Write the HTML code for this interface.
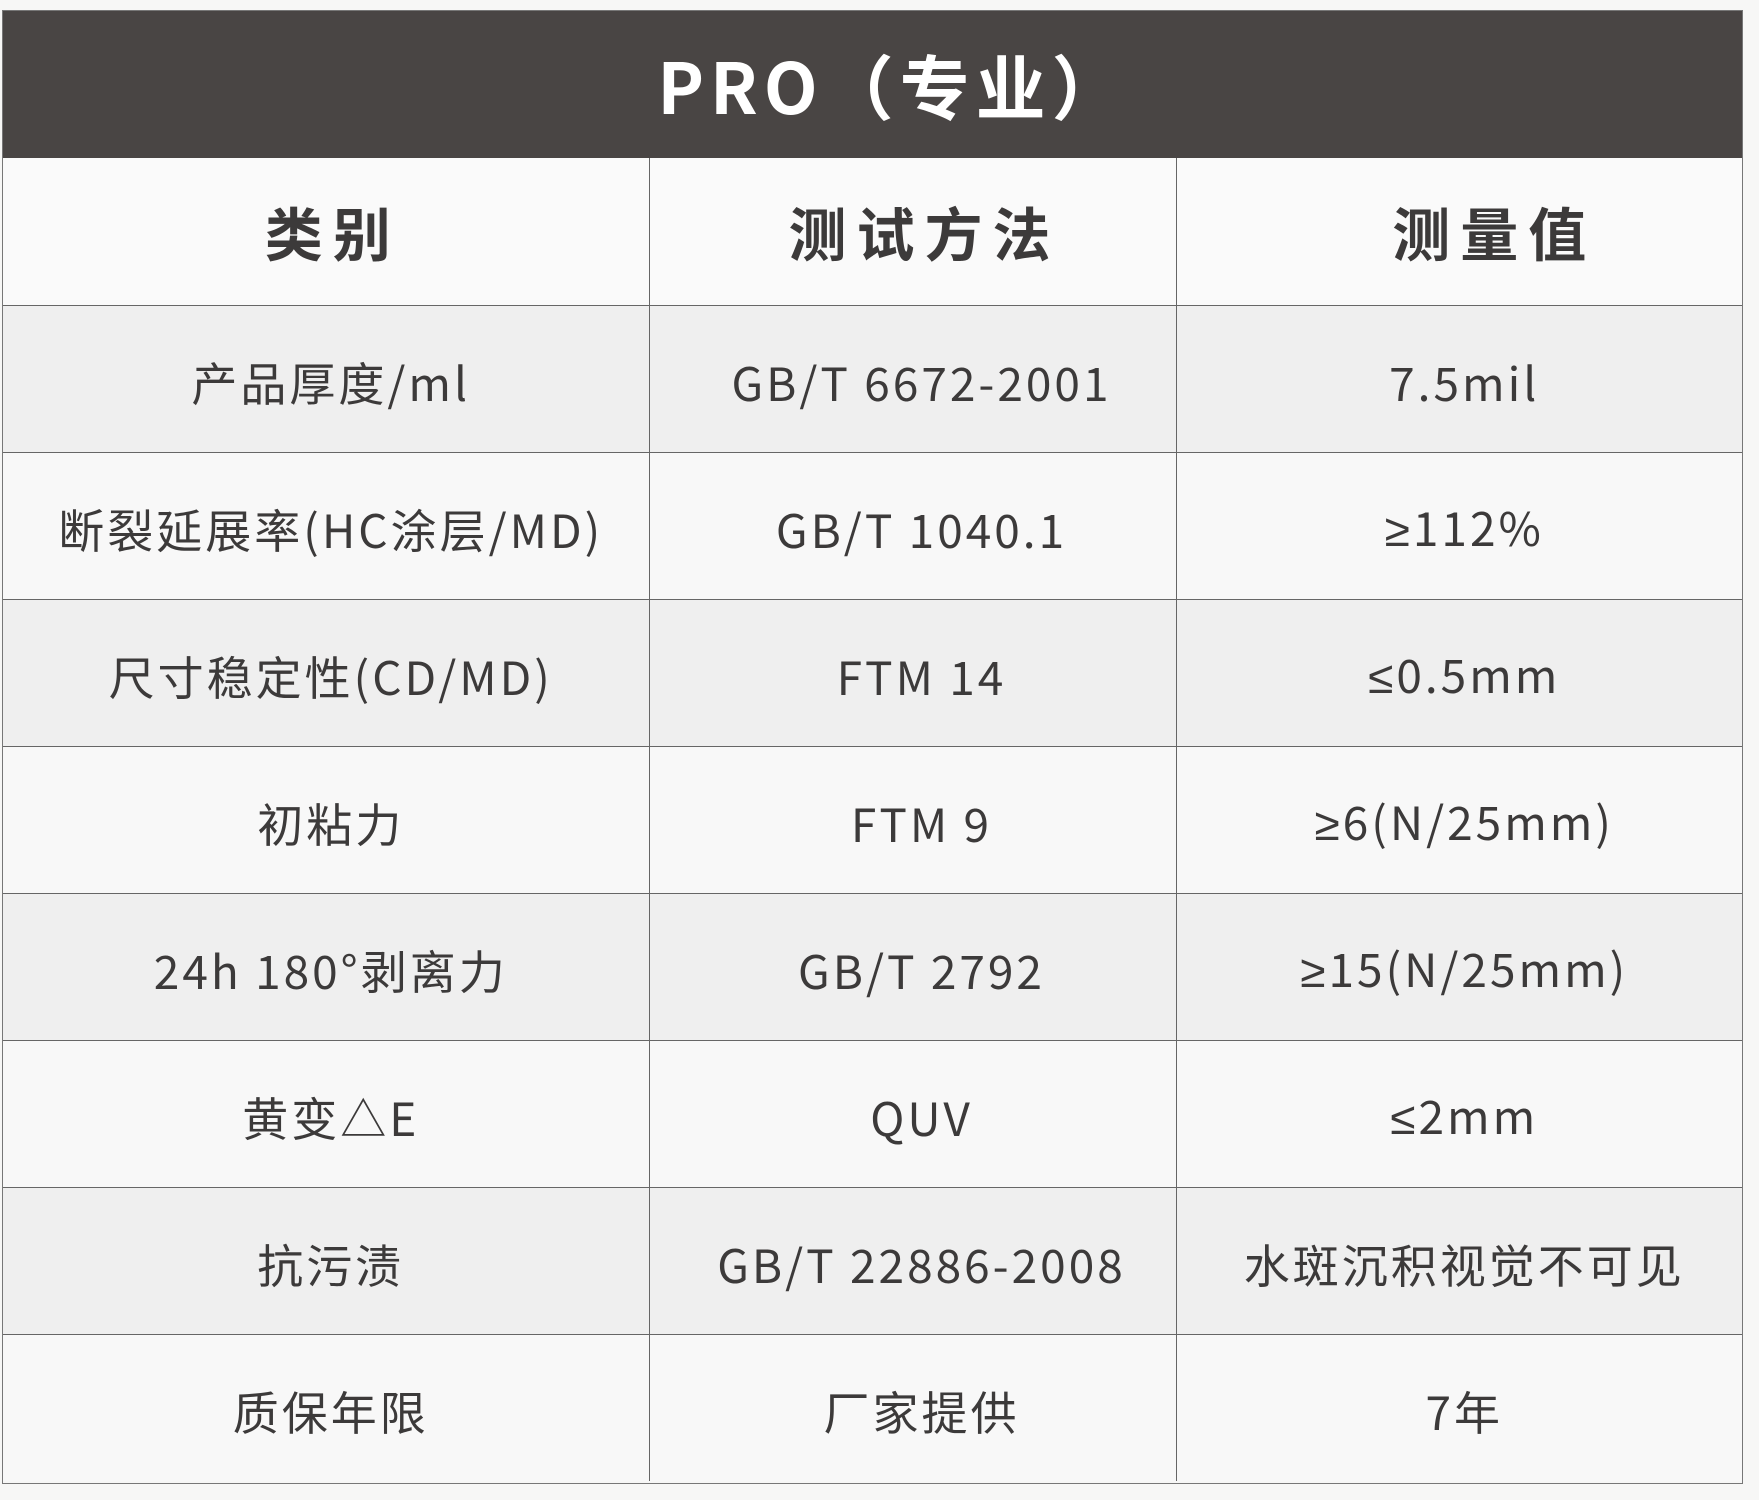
<!DOCTYPE html>
<html><head><meta charset="utf-8"><style>
html,body{margin:0;padding:0;width:1759px;height:1500px;background:#f7f7f6;overflow:hidden}
.wrap{position:absolute;left:2px;top:10px;width:1741px;height:1474px;border:1px solid #777;box-sizing:border-box;overflow:hidden}
.title{position:absolute;left:0;top:0;width:100%;height:147px;background:#494544;color:#fff;font:bold 70px "Noto Sans CJK SC",sans-serif;letter-spacing:6px;display:flex;align-items:center;justify-content:center;padding-left:40px;box-sizing:border-box}
table{position:absolute;left:0;top:147px;width:1739px;border-collapse:collapse;table-layout:fixed}
tr{height:147px}
td{border:1px solid #666;text-align:center;vertical-align:middle;font:46px "Noto Sans CJK SC",sans-serif;color:#3c3a3a;letter-spacing:3px;padding:6px 0 0 10px;white-space:nowrap;line-height:60px}
.s{font-family:"Liberation Sans",sans-serif}
tr:first-child td{border-top:none;font-weight:bold;font-size:58px;background:#fafafa;letter-spacing:10px;padding:0 0 0 14px}
tr:nth-child(even) td{background:#efefef}
tr:nth-child(odd) td{background:#f8f8f8}
tr:first-child td{background:#fafafa}
td:first-child{border-left:none}td:last-child{border-right:none}
tr:last-child td{border-bottom:none}
</style></head><body>
<div class="wrap">
<div class="title">PRO（专业）</div>
<table>
<colgroup><col style="width:646px"><col style="width:527px"><col style="width:566px"></colgroup>
<tr><td>类别</td><td style="padding-left:24px">测试方法</td><td style="padding-left:70px">测量值</td></tr>
<tr><td>产品厚度/ml</td><td style="padding-left:18px">GB/T 6672-2001</td><td>7.5mil</td></tr>
<tr><td>断裂延展率(HC涂层/MD)</td><td style="padding-left:18px">GB/T 1040.1</td><td><span class="s">≥</span>112%</td></tr>
<tr><td>尺寸稳定性(CD/MD)</td><td style="padding-left:18px">FTM 14</td><td><span class="s">≤</span>0.5mm</td></tr>
<tr><td>初粘力</td><td style="padding-left:18px">FTM 9</td><td><span class="s">≥</span>6(N/25mm)</td></tr>
<tr><td>24h 180°剥离力</td><td style="padding-left:18px">GB/T 2792</td><td><span class="s">≥</span>15(N/25mm)</td></tr>
<tr><td>黄变△E</td><td style="padding-left:18px">QUV</td><td><span class="s">≤</span>2mm</td></tr>
<tr><td>抗污渍</td><td style="padding-left:18px">GB/T 22886-2008</td><td>水斑沉积视觉不可见</td></tr>
<tr><td>质保年限</td><td style="padding-left:18px">厂家提供</td><td>7年</td></tr>
</table>
</div>
</body></html>
